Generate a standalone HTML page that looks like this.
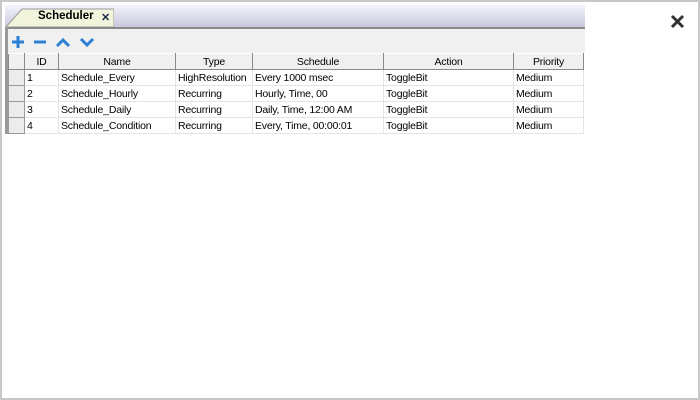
<!DOCTYPE html><html><head><style>
body{margin:0;width:700px;height:400px;background:#fff;position:relative;overflow:hidden;font-family:"Liberation Sans",sans-serif;}
.frame{position:absolute;left:0;top:0;width:696px;height:396px;border:2px solid #c8c8c8;}
.shot{position:absolute;left:5px;top:5px;width:580px;height:129px;background:#fff;overflow:hidden;}
.tabbar{position:absolute;left:0;top:0;width:580px;height:22px;background:linear-gradient(#f4f4fa,#c8c8de);}
.darkline{position:absolute;left:0;top:22px;width:580px;height:2px;background:#8a8a8a;}
.tab{position:absolute;left:1px;top:2px;width:108px;height:20px;}
.tab span{position:absolute;left:32px;top:3px;font-size:11.5px;font-weight:bold;color:#000;}
.tab i{position:absolute;left:95px;top:4px;font-style:normal;font-size:11px;font-weight:bold;color:#1a2a4a;}
.left{position:absolute;left:0;top:22px;width:3px;height:110px;background:#9a9a9a;}
.toolbar{position:absolute;left:3px;top:24px;width:577px;height:24px;background:#f0f0f0;}
table{position:absolute;left:3px;top:48px;border-collapse:collapse;font-size:10.5px;table-layout:fixed;letter-spacing:-0.2px;}
td,th{height:15px;padding:0 0 0 2px;white-space:nowrap;overflow:hidden;border-right:1px solid #e4e4e4;border-bottom:1px solid #e4e4e4;}
th{font-weight:normal;background:#f0f0f0;border:1px solid #8a8a8a;border-top:1px solid #fff;text-align:center;height:15px;padding:0;}
td.rh{background:#ececec;border:1px solid #9a9a9a;border-top-color:#fff;}
</style></head><body>
<div class="frame"></div>
<div class="shot">
<div class="tabbar"></div>
<svg class="tab" viewBox="0 0 108 20"><path d="M0 20 L16 2 L108 2 L108 20 Z" fill="#f2f5dc" stroke="#9a9a9a"/></svg>
<div class="tab"><span>Scheduler</span><i>✕</i></div>
<div class="darkline"></div>
<div class="left"></div>
<div class="toolbar">
<svg width="100" height="24" viewBox="0 0 100 24"><g stroke="#2d7fd6" stroke-width="3" fill="none"><path d="M4 13h12M10 7v12"/><path d="M26 13h12"/><path d="M49 17l6-6 6 6"/><path d="M73 10l6 6 6-6"/></g></svg>
</div>
<table>
<colgroup><col style="width:16px"><col style="width:34px"><col style="width:117px"><col style="width:77px"><col style="width:131px"><col style="width:130px"><col style="width:70px"></colgroup>
<tr><th></th><th>ID</th><th>Name</th><th>Type</th><th>Schedule</th><th>Action</th><th>Priority</th></tr>
<tr><td class="rh"></td><td>1</td><td>Schedule_Every</td><td>HighResolution</td><td>Every 1000 msec</td><td>ToggleBit</td><td>Medium</td></tr>
<tr><td class="rh"></td><td>2</td><td>Schedule_Hourly</td><td>Recurring</td><td>Hourly, Time, 00</td><td>ToggleBit</td><td>Medium</td></tr>
<tr><td class="rh"></td><td>3</td><td>Schedule_Daily</td><td>Recurring</td><td>Daily, Time, 12:00 AM</td><td>ToggleBit</td><td>Medium</td></tr>
<tr><td class="rh"></td><td>4</td><td>Schedule_Condition</td><td>Recurring</td><td>Every, Time, 00:00:01</td><td>ToggleBit</td><td>Medium</td></tr>
<tr><td class="rh"></td><td></td><td></td><td></td><td></td><td></td><td></td></tr>
</table>
</div>
<svg style="position:absolute;left:670px;top:14px" width="15" height="15" viewBox="0 0 15 15"><path d="M2 2L13 13M13 2L2 13" stroke="#333" stroke-width="3"/></svg>
</body></html>
